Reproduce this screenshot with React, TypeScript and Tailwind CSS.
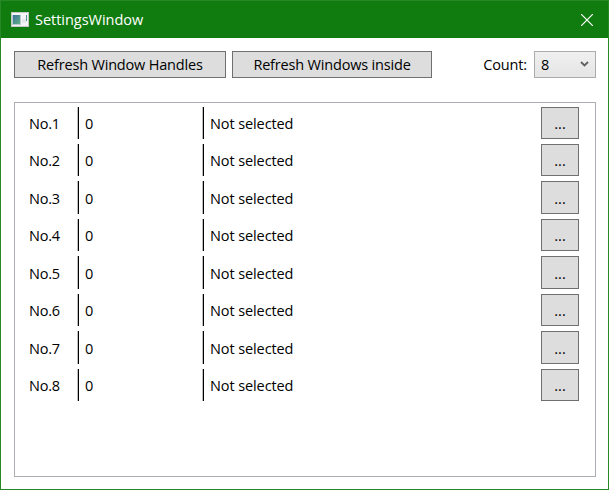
const rows = [
  { id: 1, height: 'h-[32px]' },
  { id: 2, height: 'h-[32px]' },
  { id: 3, height: 'h-[33px]' },
  { id: 4, height: 'h-[32px]' },
  { id: 5, height: 'h-[33px]' },
  { id: 6, height: 'h-[32px]' },
  { id: 7, height: 'h-[33px]' },
  { id: 8, height: 'h-[32px]' },
];

const button = 'flex items-center justify-center border border-[#707070] bg-[#dddddd] whitespace-nowrap';
const divided = 'flex items-center border-l border-l-black pt-[2px] pl-[6px] shadow-[-1px_0_0_#bdbdbd]';

function WindowIcon() {
  return (
    <svg width="18" height="15" viewBox="0 0 18 15" shapeRendering="crispEdges">
      <defs>
        <linearGradient id="pane" x1="0" y1="0" x2="1" y2="1">
          <stop offset="0" stopColor="#3f6fa0" />
          <stop offset="1" stopColor="#5fb183" />
        </linearGradient>
      </defs>
      <rect x="0.5" y="0.5" width="17" height="14" fill="#f4f4f6" stroke="#c4c6c8" />
      <rect x="1" y="3" width="9" height="10" fill="#b9cbd0" />
      <rect x="2" y="3" width="7" height="9" fill="url(#pane)" />
      <rect x="11" y="7" width="4" height="4" fill="#e6e7ea" />
      <rect x="15" y="3" width="1" height="6" fill="#4f9290" />
    </svg>
  );
}

export default function App() {
  return (
    <div className="h-[493px] w-[611px] bg-white font-['Open_Sans','Noto_Sans',sans-serif] text-[14.5px] leading-5 text-black">
      <div className="flex h-[490px] w-[609px] flex-col border border-[#268926] bg-white">
        <header className="flex h-[37px] shrink-0 items-center bg-[#107c10] pr-[15px] pl-[10px] text-white">
          <WindowIcon />
          <h1 className="ml-[6px] pt-px tracking-[-0.02px]">SettingsWindow</h1>
          <button aria-label="Close" className="ml-auto">
            <svg width="12" height="12" viewBox="0 0 12 12" stroke="white" strokeWidth="1.2">
              <path d="M0 0L12 12M12 0L0 12" />
            </svg>
          </button>
        </header>
        <div className="mr-[12px] ml-[13px] mt-[13px] flex h-[27px] shrink-0 items-center">
          <button className={`${button} h-[27px] w-[212px] tracking-[-0.18px]`}>Refresh Window Handles</button>
          <button className={`${button} ml-[6px] h-[27px] w-[200px] tracking-[-0.18px]`}>Refresh Windows inside</button>
          <span className="ml-auto pr-[7px] tracking-[-0.15px]">Count:</span>
          <button className="flex h-[27px] w-[62px] items-center justify-between border border-[#acacac] bg-linear-to-b from-[#f0f0f0] to-[#e5e5e5] pr-[6px] pl-[6px]">
            <span>8</span>
            <svg width="9" height="6" viewBox="0 0 9 6" fill="none" stroke="#606060" strokeWidth="1.8" className="-mt-[2px]">
              <path d="M1 1L4.5 4.5L8 1" />
            </svg>
          </button>
        </div>
        <main className="mr-[12px] ml-[13px] mt-[24px] flex h-[375px] shrink-0 flex-col gap-[5px] border border-[#abadb3] pt-[4px] pr-[16px] pl-[14px]">
          {rows.map((row) => (
            <div key={row.id} className={`flex shrink-0 items-stretch ${row.height}`}>
              <span className="flex w-[49px] items-center pt-[2px] tracking-[-0.2px]">No.{row.id}</span>
              <span className={`${divided} w-[125px]`}>0</span>
              <span className={`${divided} flex-1 tracking-[-0.1px]`}>Not selected</span>
              <button className={`${button} w-[38px] pt-[2px]`}>...</button>
            </div>
          ))}
        </main>
      </div>
    </div>
  );
}
